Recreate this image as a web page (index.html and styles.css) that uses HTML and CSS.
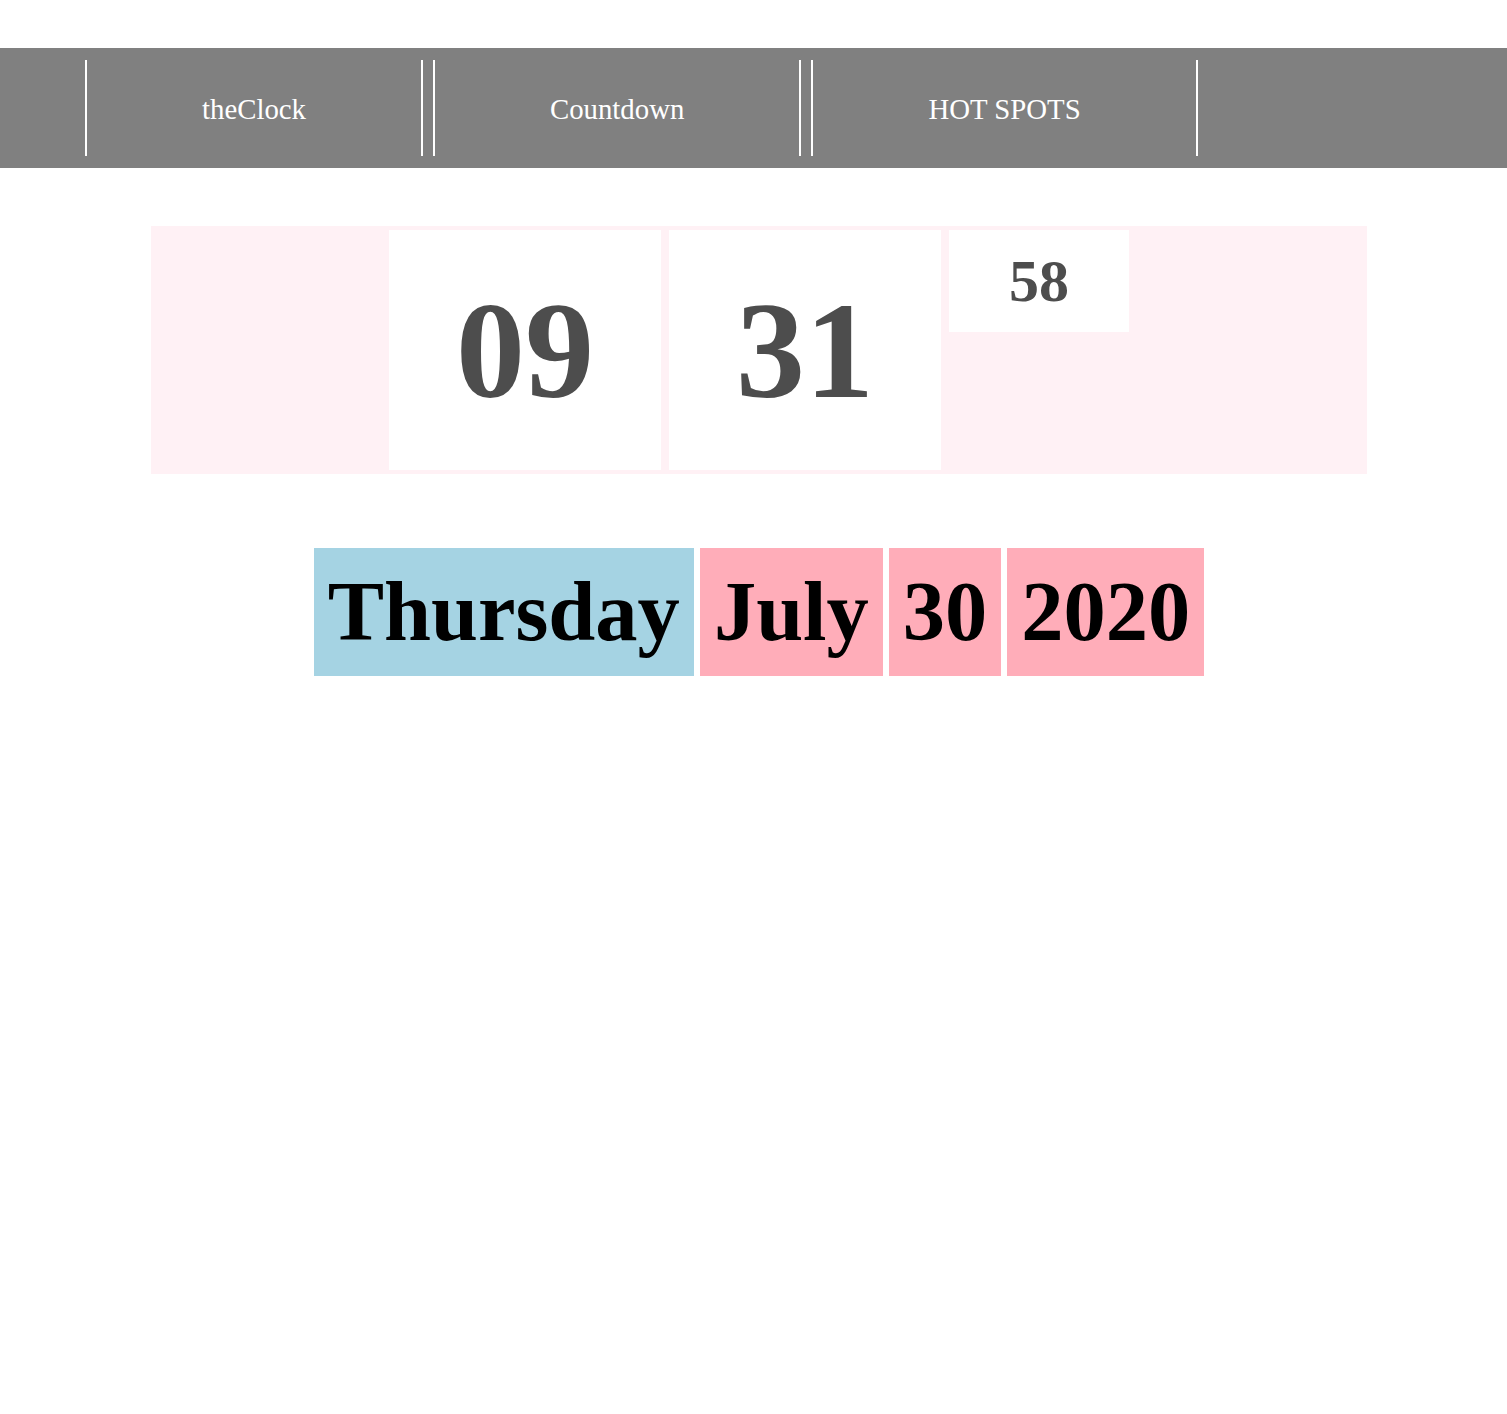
FILE: index.html
```html
<!DOCTYPE html>
<html>
<head>
<meta charset="utf-8">
<title>theClock</title>
<link rel="stylesheet" href="styles.css">
</head>
<body>
<nav class="nav">
  <a class="nav-item" href="#">theClock</a>
  <a class="nav-item" href="#">Countdown</a>
  <a class="nav-item" href="#">HOT SPOTS</a>
</nav>
<main class="main">
  <section class="clock">
    <div class="tile tile-big">09</div>
    <div class="tile tile-big">31</div>
    <div class="tile tile-small">58</div>
  </section>
  <section class="date">
    <div class="date-part day">Thursday</div>
    <div class="date-part">July</div>
    <div class="date-part">30</div>
    <div class="date-part">2020</div>
  </section>
</main>
</body>
</html>
```

FILE: styles.css
```css
html, body {
  margin: 0;
  padding: 0;
  background: #ffffff;
  font-family: "Liberation Serif", "Times New Roman", serif;
}

.nav {
  margin-top: 48px;
  background: #808080;
  padding: 12px 0 12px 85px;
  display: flex;
  gap: 10px;
  height: 96px;
}

.nav-item {
  display: flex;
  align-items: center;
  justify-content: center;
  padding: 2px 115px 0;
  border-left: 2px solid #ffffff;
  border-right: 2px solid #ffffff;
  color: #ffffff;
  text-decoration: none;
  font-size: 28.8px;
  white-space: nowrap;
}

.main {
  padding-left: 11px;
}

.clock {
  width: 1216px;
  margin: 58px auto 0;
  background: #fff1f5;
  padding: 4px 0;
  display: flex;
  justify-content: center;
  align-items: flex-start;
  gap: 8px;
  box-sizing: border-box;
  height: 248px;
}

.tile {
  background: #ffffff;
  color: #4d4d4d;
  font-weight: bold;
  display: flex;
  align-items: center;
  justify-content: center;
}

.tile-big {
  width: 272px;
  height: 240px;
  font-size: 138px;
}

.tile-small {
  width: 180px;
  height: 102px;
  font-size: 60px;
}

.date {
  margin-top: 74px;
  display: flex;
  justify-content: center;
  gap: 6px;
}

.date-part {
  background: #ffadb9;
  color: #000000;
  font-weight: bold;
  font-size: 84.5px;
  padding: 15px 14px;
  line-height: 98px;
}

.date-part.day {
  background: #a5d3e3;
}
```
